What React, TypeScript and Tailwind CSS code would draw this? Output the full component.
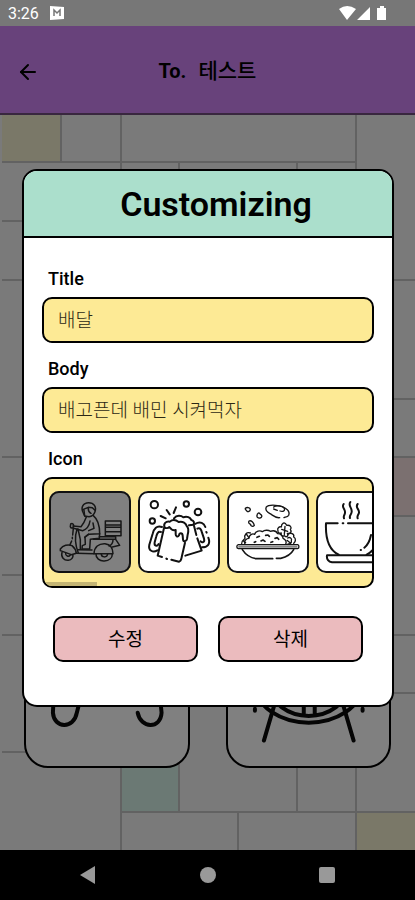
import { useState } from "react";
import type { ReactNode } from "react";
import { ArrowLeft } from "lucide-react";

const ICONS: { id: string; label: string; drawing: ReactNode }[] = [
    { id: "delivery", label: "배달", drawing: <ScooterIcon /> },
    { id: "beer", label: "맥주", drawing: <BeerIcon /> },
    { id: "rice", label: "볶음밥", drawing: <RiceIcon /> },
    { id: "coffee", label: "커피", drawing: <CoffeeIcon /> },
];

/* --- ICONS --- */

function ScooterIcon() {
    return (
        <svg viewBox="25 48 246 246" className="size-full" fill="none" stroke="#161616" strokeWidth="4.5" strokeLinecap="round" strokeLinejoin="round">
            {/* rider */}
            <path d="M128 114C119 98 127 83 144 83C160 83 168 96 163 110C160 119 153 124 145 125L132 123L128 114" />
            <path d="M126 104L143 97L155 98L163 106M143 98C142 108 144 112 151 115M132 123L130 106" />
            <path d="M137 126C133 137 128 147 121 155L97 153M158 122C170 132 177 152 177 176L145 178" />
            <path d="M148 138C146 151 138 163 126 167L99 160M157 144L160 160L144 167M143 178L132 187" />
            <path d="M177 176L176 190L149 193L147 222L124 222L125 212L134 208L133 186L144 178" />
            {/* handlebar and front */}
            <path d="M90 147C95 144 99 147 99 153C98 160 91 161 89 155ZM98 160L96 180M95 187L95 191M93 198L88 209" />
            <path d="M109 163C102 184 104 211 113 234M112 162L119 194L119 222" />
            <path d="M59 222C67 211 82 207 94 212C101 218 106 225 107 235L92 239L59 227ZM64 232C60 246 70 257 83 256C93 255 98 247 97 238" />
            <path d="M75 235C74 243 84 247 89 240M107 235L160 236M113 224L154 225" />
            {/* box */}
            <path d="M194 138H241V182H194ZM194 150H241M194 157H241M194 170H241" />
            {/* rear */}
            <path d="M176 185H225V193H158M217 194C217 204 212 210 205 213M225 193L237 211L215 216" />
            <path d="M160 236C161 216 174 205 193 206C208 208 217 219 217 236L160 236M166 237C165 249 177 259 191 258C206 257 215 248 215 237" />
            <path d="M182 237C182 248 199 249 201 237" />
        </svg>
    );
}

function BeerIcon() {
    return (
        <svg viewBox="9 9 246 246" className="size-full" fill="none" stroke="#111" strokeWidth="6" strokeLinecap="round" strokeLinejoin="round">
            <circle cx="58" cy="50" r="11" />
            <circle cx="154" cy="48" r="8" />
            <circle cx="189" cy="72" r="10" />
            <circle cx="52" cy="99" r="8" />
            <path d="M77 84L92 91M95 66L104 79M123 58L116 75" />
            {/* front mug */}
            <path d="M89 119C84 107 93 99 104 101C114 93 125 97 131 102C144 99 153 106 155 114C163 121 160 132 158 140L156 153C154 162 145 162 144 154L143 143C142 133 133 134 132 142C129 148 122 146 122 139V126C113 128 107 123 103 117C99 121 92 121 89 119" />
            <path d="M87 120L68 203L81 207M94 212L96 213M109 215L132 221C138 220 139 213 140 208L150 164" />
            <path d="M81 117C65 111 57 122 53 137L43 170C39 188 54 195 67 187" />
            <path d="M78 132C69 129 66 137 64 145L59 163C57 174 66 177 71 168" />
            {/* back mug */}
            <path d="M117 91C125 80 139 82 145 88C156 83 166 89 169 96C177 98 179 105 175 110L162 112" />
            <path d="M177 113L184 141M187 151L200 188L151 203" />
            <path d="M180 108C196 98 207 106 211 117M214 132L215 134M220 149C228 170 216 178 201 178" />
            <path d="M187 122C196 118 199 126 201 134L207 152C210 162 202 166 197 160" />
        </svg>
    );
}

function RiceIcon() {
    return (
        <svg viewBox="67 48 246 246" className="size-full" fill="none" stroke="#161616" strokeWidth="4" strokeLinecap="round" strokeLinejoin="round">
            <path d="M122 100C127 96 136 97 137 103C136 110 130 111 127 109C127 105 121 106 122 100ZM157 122C157 114 164 111 167 118C174 120 172 128 166 129C160 130 156 127 157 122ZM133 138C140 135 147 143 149 151C145 156 137 154 138 148C132 146 131 143 133 138Z" />
            {/* fried egg */}
            <path d="M185 96C191 88 216 89 233 95C247 101 256 111 252 121C248 127 241 126 238 128M225 128C212 130 205 121 196 116C187 111 181 104 185 96" />
            <path d="M207 96C215 90 234 92 239 100C242 108 234 111 226 108M218 106L207 102" />
            {/* rice mound */}
            <path d="M121 207C116 198 126 190 133 190C133 180 143 174 150 178C153 168 166 165 173 170C181 163 193 166 197 169C208 165 216 170 219 176C229 176 235 184 235 190C244 194 246 202 243 207" />
            <path d="M111 206C110 195 119 195 121 190C117 180 126 170 137 174M125 177L132 187M115 196L123 203" />
            <path d="M157 187L164 184M169 198L175 195L181 199M183 181L190 180L194 184M211 190L218 188L222 193M149 202L153 200M199 202L204 200" strokeWidth="5" />
            {/* vegetables */}
            <path d="M220 168C216 158 225 154 230 156C230 145 240 138 246 151C256 149 263 157 257 164C263 171 255 177 248 175C253 184 244 188 239 182C233 186 227 180 230 174C224 176 219 173 220 168Z" />
            <path d="M241 154L239 178M231 163L249 169M250 178C258 171 270 177 267 186C275 190 273 201 267 205M249 189C255 185 263 190 260 197C262 204 257 207 250 207M247 196L258 205" />
            <path d="M101 209H279C284 211 284 219 279 221H101C95 219 95 211 101 209Z" strokeWidth="4" />
            <path d="M104 215H275" stroke="#888" strokeWidth="7" />
            <path d="M113 224C124 241 139 249 154 251L204 251M215 250H228C246 246 260 237 267 224" strokeWidth="5" />
        </svg>
    );
}

function CoffeeIcon() {
    return (
        <svg viewBox="336 48 246 246" className="size-full" fill="none" stroke="#111" strokeWidth="6" strokeLinecap="round" strokeLinejoin="round">
            <path d="M419 87C411 98 425 102 423 113C423 120 417 122 420 130M439 81C431 93 445 98 443 111C442 119 435 122 438 129M461 87C452 98 467 102 465 113C464 120 458 122 461 130" />
            <path d="M401 145H366C364 189 374 224 404 239M416 145H418M432 145H527C529 189 517 224 488 239" />
            <path d="M501 180C497 200 490 211 481 218M470 225L471 225M527 158C565 150 565 206 518 205" />
            <path d="M369 241H523C530 251 521 262 510 262H384C374 261 367 253 369 241Z" />
        </svg>
    );
}

function RamenIcon() {
    return (
        <svg viewBox="0 0 162 162" className="w-full" fill="none" stroke="#050505" strokeWidth="4" strokeLinecap="round">
            <path d="M28 88L27 108C28 124 48 125 51 108L56 88M112 108C115 124 135 125 136 108L134 88M50 88H111" />
        </svg>
    );
}

function GrillIcon() {
    return (
        <svg viewBox="0 0 162 162" className="w-full" fill="none" stroke="#050505" strokeWidth="4" strokeLinecap="round">
            <path d="M24 76C32 132 130 132 138 76M38 76C46 123 116 123 124 76M76 100V110M87 100V110" />
            <path d="M46 102L36 136M116 102L126 136M27 104V106M135 104V106" />
        </svg>
    );
}

/* --- WALLPAPER --- */

function Wallpaper() {
    return (
        <svg viewBox="0 0 415 735" preserveAspectRatio="xMidYMin slice" className="absolute inset-0 size-full" aria-hidden="true">
            <rect width="415" height="735" fill="#7a7a7a" />
            <path d="M2 0H61V47H2ZM356 697H415V735H356Z" fill="#7a7868" />
            <path d="M121 638H179V697H121Z" fill="#6b7974" />
            <path d="M356 343H415V401H356Z" fill="#7b7070" />
            <path
                d="M61 0V47M121 0V106M356 0V165M2 47H356M179 47V106M297 47V106M2 106H121M2 165H61M356 165H415M356 284H415M2 342H61M356 342H415M356 401H415M2 460H61M2 520H61M356 520H415M356 578H415M2 637H61M121 578V735M179 578V697M297 578V697M356 578V735M121 697H415M238 697V735"
                fill="none"
                stroke="#626262"
                strokeWidth="2"
            />
        </svg>
    );
}

/* --- SYSTEM BARS --- */

function StatusBar() {
    return (
        <div className="flex h-[26px] items-center bg-[#777777] pr-7 pl-2 text-white">
            <span className="pt-0.5 text-base">3:26</span>
            <svg viewBox="0 0 16 16" className="ml-2.5 size-4" aria-hidden="true">
                <path d="M1 1L15 2V14L1 15Z" fill="#fff" />
                <path d="M5 11V5L8 8L11 5V11" fill="none" stroke="#777" strokeWidth="1.5" />
            </svg>
            <svg viewBox="0 0 48 16" className="ml-auto h-4 w-12" fill="#fff" aria-hidden="true">
                <path d="M0 4Q8 -2 17 4L8 15ZM18 15L31 2V15ZM38 3H41V1H45V3H47V15H38Z" />
            </svg>
        </div>
    );
}

function NavigationBar() {
    return (
        <nav className="grid h-[50px] grid-cols-[1fr_64px_1fr] items-center bg-black text-[#999999]">
            <button aria-label="뒤로" className="justify-self-center">
                <svg viewBox="0 0 18 18" className="size-[18px]" fill="currentColor"><path d="M1 9L16 0V18Z" /></svg>
            </button>
            <button aria-label="홈" className="size-4 justify-self-center rounded-full bg-[#999999]" />
            <button aria-label="최근 앱" className="size-4 justify-self-center rounded-xs bg-[#999999]" />
        </nav>
    );
}

/* --- DIALOG --- */

function Field({ id, label, value, onChange }: { id: string; label: string; value: string; onChange: (v: string) => void }) {
    return (
        <div className="flex flex-col gap-2">
            <label htmlFor={id} className="pl-1.5 text-lg leading-5 font-medium">{label}</label>
            <input
                id={id}
                value={value}
                onChange={(e) => onChange(e.target.value)}
                className="h-[46px] w-full rounded-[10px] border-2 border-black bg-[#fdea95] px-3.5 pb-1 text-[19px] font-light text-[#2c2814] outline-none"
            />
        </div>
    );
}

function CustomizingDialog() {
    const [title, setTitle] = useState("배달");
    const [body, setBody] = useState("배고픈데 배민 시켜먹자");
    const [icon, setIcon] = useState("delivery");

    return (
        <div role="dialog" aria-labelledby="dialog-title" className="relative col-start-1 row-start-1 mr-[21px] ml-[22px] mt-[54px] min-w-0 self-start overflow-hidden rounded-[15px] border-2 border-black bg-white">
            <header className="flex h-[67px] items-center justify-center border-b-2 border-black bg-[#abdfcc] pt-0.5 pl-4">
                <h2 id="dialog-title" className="text-[34px] font-semibold">Customizing</h2>
            </header>
            <form className="flex flex-col gap-4 px-[18px] pt-[31px] pb-[43px]" onSubmit={(e) => e.preventDefault()}>
                <Field id="title" label="Title" value={title} onChange={setTitle} />
                <Field id="body" label="Body" value={body} onChange={setBody} />

                <fieldset className="min-w-0">
                    <legend className="mb-2 pl-1.5 text-lg leading-5 font-medium">Icon</legend>
                    <div className="relative overflow-hidden rounded-[10px] border-2 border-black bg-[#fdea95]">
                        <div className="flex gap-[7px] overflow-x-auto px-[5px] pt-3 pb-[13px] [scrollbar-width:none]">
                            {ICONS.map((item) => (
                                <button
                                    key={item.id}
                                    type="button"
                                    aria-label={item.label}
                                    aria-pressed={icon === item.id}
                                    onClick={() => setIcon(item.id)}
                                    className={`size-[82px] shrink-0 overflow-hidden rounded-[10px] outline-2 -outline-offset-2 outline-[#111111] ${icon === item.id ? "bg-[#808080]" : "bg-white"}`}
                                >
                                    {item.drawing}
                                </button>
                            ))}
                        </div>
                        {/* scroll thumb */}
                        <div className="absolute bottom-0 left-0 h-1 w-[53px] bg-[#c4b574]" />
                    </div>
                </fieldset>

                <div className="mt-3 grid grid-cols-2 gap-5 px-[11px]">
                    <button type="submit" className="h-[46px] rounded-[10px] border-2 border-black bg-[#ebbbbe] pt-0.5 text-[19px]">수정</button>
                    <button type="button" className="h-[46px] rounded-[10px] border-2 border-black bg-[#ebbbbe] pt-0.5 text-[19px]">삭제</button>
                </div>
            </form>
        </div>
    );
}

export default function App() {
    return (
        <div className="flex min-h-screen flex-col bg-[#7a7a7a] font-[Roboto,'Noto_Sans_CJK_KR',sans-serif] text-black">
            <StatusBar />
            <header className="grid h-[89px] grid-cols-[24px_1fr_24px] items-center border-b-2 border-[#39273f] bg-[#68427b] px-4 pt-1">
                <button aria-label="뒤로 가기">
                    <ArrowLeft size={24} strokeWidth={2} />
                </button>
                <h1 className="flex items-center justify-center gap-3 text-xl">
                    <span className="font-bold">To.</span>
                    <span className="text-[21px] font-medium">테스트</span>
                </h1>
            </header>

            <main className="relative grid flex-1">
                <Wallpaper />
                {/* cards under the dialog */}
                <div className="relative col-start-1 row-start-1 grid grid-cols-2 gap-9 self-end px-6 pb-[82px]">
                    <div className="overflow-hidden rounded-3xl border-2 border-black bg-[#808080]"><RamenIcon /></div>
                    <div className="overflow-hidden rounded-3xl border-2 border-black bg-[#808080]"><GrillIcon /></div>
                </div>
                <CustomizingDialog />
            </main>

            <NavigationBar />
        </div>
    );
}
